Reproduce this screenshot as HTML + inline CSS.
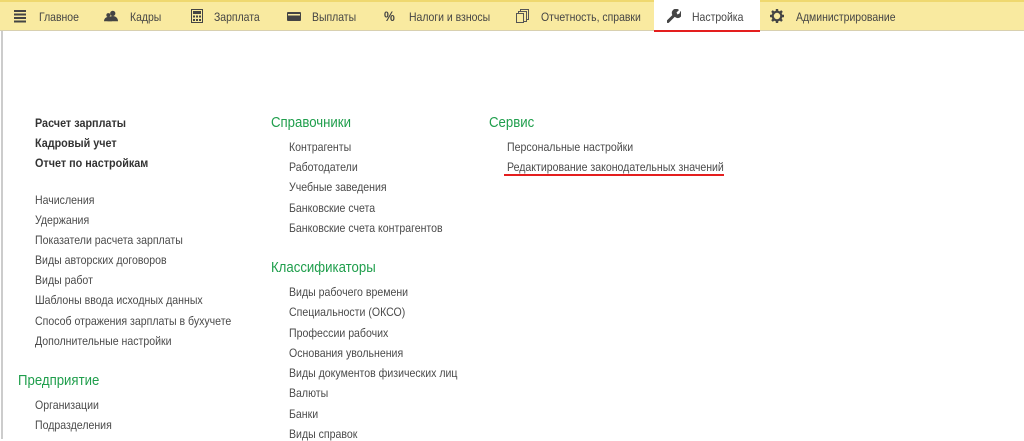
<!DOCTYPE html>
<html><head><meta charset="utf-8"><style>
body{margin:0;width:1024px;height:439px;overflow:hidden;background:#fff;font-family:"Liberation Sans",Arial,sans-serif;position:relative}
.bar{position:absolute;left:0;top:0;width:1024px;height:31px;background:#f9eaa0;border-top:2px solid #efd870;box-sizing:border-box;border-bottom:1px solid #d8d0b0}
.t{position:absolute;top:10px;font-size:12px;color:#444;white-space:nowrap;transform:scaleX(0.87);transform-origin:0 0}
.i{position:absolute;top:9px;width:14px;height:14px}
.act{position:absolute;left:654px;top:0;width:106px;height:31px;background:#fff}
.red{position:absolute;left:654px;top:30px;width:106px;height:2px;background:#e41e1e}
.lb{position:absolute;left:1px;top:31px;width:2px;height:408px;background:#ccc}
.a{position:absolute;font-size:12px;color:#4a4a4a;white-space:nowrap;line-height:14px;transform:scaleX(0.88);transform-origin:0 0}
.b{position:absolute;font-size:12px;color:#333;font-weight:bold;white-space:nowrap;line-height:14px;transform:scaleX(0.9);transform-origin:0 0}
.h{position:absolute;font-size:14.5px;color:#1f9e4c;white-space:nowrap;line-height:16px;transform:scaleX(0.91);transform-origin:0 0}
</style></head><body>
<div class="bar"></div>
<div class="act"></div><div class="red"></div>
<div class="lb"></div>
<svg class="i" style="left:13px" viewBox="0 0 14 14"><g fill="#444"><rect x="1" y="1" width="12" height="2"/><rect x="1" y="4.5" width="12" height="2"/><rect x="1" y="8" width="12" height="2"/><rect x="1" y="11.5" width="12" height="2"/></g></svg>
<div class="t" style="left:39px">Главное</div>
<svg class="i" style="left:104px" viewBox="0 0 16 14"><g fill="#444"><circle cx="10" cy="4" r="3"/><path d="M4 13c0-4 3-6 6-6s6 2 6 6z"/><circle cx="5" cy="6" r="2.3"/><path d="M0 13c0-3 2-5 5-5s4 2 4 5z"/></g></svg>
<div class="t" style="left:130px">Кадры</div>
<svg class="i" style="left:190px" viewBox="0 0 14 14"><rect x="1.5" y="0.5" width="11" height="13" fill="none" stroke="#444"/><rect x="3" y="2" width="8" height="3" fill="#444"/><g fill="#444"><rect x="3" y="6.5" width="2" height="2"/><rect x="6" y="6.5" width="2" height="2"/><rect x="9" y="6.5" width="2" height="2"/><rect x="3" y="10" width="2" height="2"/><rect x="6" y="10" width="2" height="2"/><rect x="9" y="10" width="2" height="2"/></g></svg>
<div class="t" style="left:214px">Зарплата</div>
<svg class="i" style="left:287px" viewBox="0 0 14 14"><rect x="0" y="3" width="14" height="9" rx="1" fill="#444"/><rect x="1" y="5" width="12" height="1.5" fill="#f9eaa0"/></svg>
<div class="t" style="left:312px">Выплаты</div>
<div class="t" style="left:384px;top:8px;font-size:14px;font-weight:bold;color:#444">%</div>
<div class="t" style="left:409px">Налоги и взносы</div>
<svg class="i" style="left:516px" viewBox="0 0 14 14"><g fill="none" stroke="#555"><rect x="4.5" y="0.5" width="8" height="10"/><rect x="2.5" y="2.5" width="8" height="10" fill="#f9eaa0"/><rect x="0.5" y="4.5" width="7" height="9" fill="#f9eaa0"/></g></svg>
<div class="t" style="left:541px">Отчетность, справки</div>
<svg class="i" style="left:667px" viewBox="0 0 14 14"><path d="M1 12.5 7 6.5" stroke="#444" stroke-width="3" stroke-linecap="round"/><path d="M6 7A4 4 0 0 1 12 1L9.5 3.5 10.5 5.5 12.5 4.5 13.5 2A4 4 0 0 1 8 8z" fill="#444"/></svg>
<div class="t" style="left:692px">Настройка</div>
<svg class="i" style="left:770px" viewBox="0 0 14 14"><circle cx="7" cy="7" r="4.3" fill="none" stroke="#444" stroke-width="2.2"/><g stroke="#444" stroke-width="2.4"><path d="M7 0v3M7 11v3M0 7h3M11 7h3M2 2l2 2M10 10l2 2M2 12l2-2M10 4l2-2"/></g></svg>
<div class="t" style="left:796px">Администрирование</div>

<div class="b" style="left:35px;top:116px">Расчет зарплаты</div>
<div class="b" style="left:35px;top:136px">Кадровый учет</div>
<div class="b" style="left:35px;top:156px">Отчет по настройкам</div>
<div class="a" style="left:35px;top:193px">Начисления</div>
<div class="a" style="left:35px;top:213px">Удержания</div>
<div class="a" style="left:35px;top:233px">Показатели расчета зарплаты</div>
<div class="a" style="left:35px;top:253px">Виды авторских договоров</div>
<div class="a" style="left:35px;top:273px">Виды работ</div>
<div class="a" style="left:35px;top:293px">Шаблоны ввода исходных данных</div>
<div class="a" style="left:35px;top:314px">Способ отражения зарплаты в бухучете</div>
<div class="a" style="left:35px;top:334px">Дополнительные настройки</div>
<div class="h" style="left:18px;top:373px">Предприятие</div>
<div class="a" style="left:35px;top:398px">Организации</div>
<div class="a" style="left:35px;top:418px">Подразделения</div>

<div class="h" style="left:271px;top:115px">Справочники</div>
<div class="a" style="left:289px;top:140px">Контрагенты</div>
<div class="a" style="left:289px;top:160px">Работодатели</div>
<div class="a" style="left:289px;top:180px">Учебные заведения</div>
<div class="a" style="left:289px;top:201px">Банковские счета</div>
<div class="a" style="left:289px;top:221px">Банковские счета контрагентов</div>
<div class="h" style="left:271px;top:260px">Классификаторы</div>
<div class="a" style="left:289px;top:285px">Виды рабочего времени</div>
<div class="a" style="left:289px;top:305px">Специальности (ОКСО)</div>
<div class="a" style="left:289px;top:326px">Профессии рабочих</div>
<div class="a" style="left:289px;top:346px">Основания увольнения</div>
<div class="a" style="left:289px;top:366px">Виды документов физических лиц</div>
<div class="a" style="left:289px;top:386px">Валюты</div>
<div class="a" style="left:289px;top:407px">Банки</div>
<div class="a" style="left:289px;top:427px">Виды справок</div>

<div class="h" style="left:489px;top:115px">Сервис</div>
<div class="a" style="left:507px;top:140px">Персональные настройки</div>
<div class="a" style="left:507px;top:160px">Редактирование законодательных значений</div>
<div style="position:absolute;left:504px;top:174px;width:220px;height:2px;background:#e41e1e"></div>
</body></html>
